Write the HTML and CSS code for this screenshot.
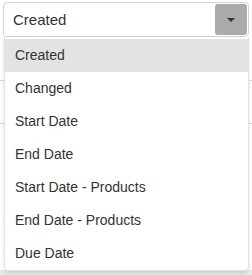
FILE: index.html
```html
<!DOCTYPE html>
<html lang="en">
<head>
    <meta charset="UTF-8">
    <meta name="viewport" content="width=device-width, initial-scale=1.0">
    <title>Sort by</title>
    <link rel="stylesheet" href="styles.css">
</head>
<body>
    <!-- Sort field picker -->
    <div class="picker">
        <div class="select">
            <span class="select-value">Created</span>
            <span class="select-arrow"></span>
        </div>

        <!-- Open dropdown -->
        <ul class="options">
            <li class="selected">Created</li>
            <li>Changed</li>
            <li>Start Date</li>
            <li>End Date</li>
            <li>Start Date - Products</li>
            <li>End Date - Products</li>
            <li>Due Date</li>
        </ul>
    </div>

    <!-- Page behind the dropdown -->
    <div class="backdrop">
        <div class="row"></div>
        <div class="row"></div>
        <div class="footer"></div>
    </div>
</body>
</html>
```

FILE: styles.css
```css
body {
    margin: 0;
    padding: 0;
    background-color: #FFFFFF;
    font-family: "Liberation Sans", Arial, sans-serif;
    color: #333333;
    width: 252px;
    height: 275px;
    overflow: hidden;
    position: relative;
}

.picker {
    position: relative;
    padding: 2px 3px 0 3px;
    z-index: 2;
}

.select {
    display: flex;
    align-items: center;
    justify-content: space-between;
    height: 33px;
    border: 1px solid #D4D4D4;
    border-radius: 4px;
    background-color: #FFFFFF;
    padding: 0 1px 0 9px;
}

.select-value {
    font-size: 15px;
}

.select-arrow {
    width: 32px;
    height: 31px;
    margin-left: 1px;
    background-color: #ABABAB;
    border-radius: 3px;
    display: flex;
    align-items: center;
    justify-content: center;
}

.select-arrow::after {
    content: "";
    border-left: 4px solid transparent;
    border-right: 4px solid transparent;
    border-top: 4px solid #333333;
}

.options {
    position: absolute;
    top: 37px;
    left: 4px;
    right: 3px;
    margin: 0;
    padding: 2px 0 0 0;
    list-style: none;
    background-color: #FFFFFF;
    border: 1px solid #E2E2E2;
    border-top: none;
    border-radius: 0 0 5px 5px;
    box-shadow: 0 2px 4px rgba(0, 0, 0, 0.12);
}

.options li {
    height: 33px;
    line-height: 33px;
    padding-left: 10px;
    font-size: 14px;
    color: #333333;
}

.options li.selected {
    background-color: #E3E3E3;
}

.backdrop {
    position: absolute;
    top: 38px;
    left: 0;
    right: 0;
    bottom: 0;
    z-index: 1;
}

.row {
    height: 42px;
    border-bottom: 1px solid #DADADA;
}

.footer {
    position: absolute;
    left: 0;
    right: 0;
    bottom: 0;
    height: 5px;
    background-color: #E8E8E8;
}
```
